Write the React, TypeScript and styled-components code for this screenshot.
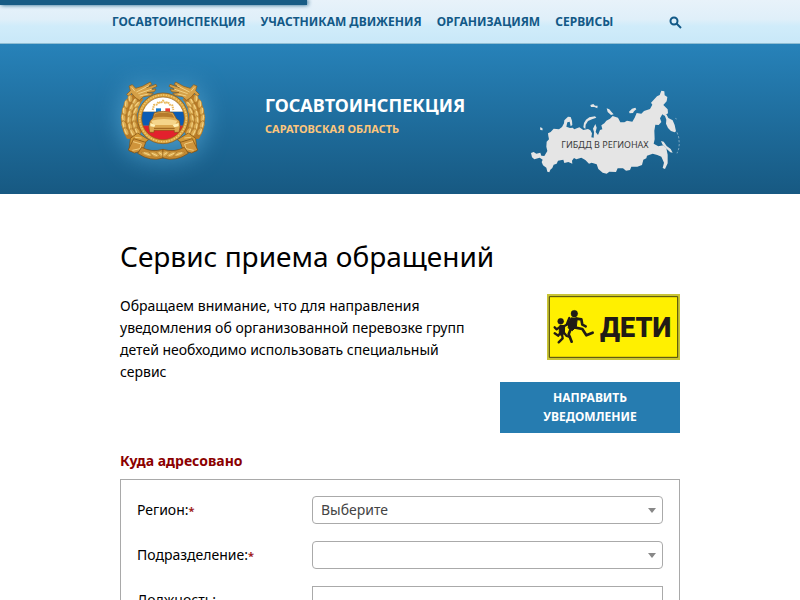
import React from "react";
import styled, { createGlobalStyle } from "styled-components";

const GlobalStyle = createGlobalStyle`
  *, *::before, *::after { box-sizing: border-box; }
  body {
    margin: 0;
    background: #fff;
    color: #000;
    font: 14px/22px "Noto Sans", "Open Sans", sans-serif;
  }
  h1, h2, p { margin: 0; }
  a { color: inherit; text-decoration: none; }
`;

const Container = styled.div`
  width: 100%;
  max-width: 576px;
  margin: 0 auto;
  padding: 0 8px;
`;

const TopBar = styled.header`
  border-bottom: 1px solid #8fbdd3;
  background: linear-gradient(#e8f2fa, #dfeff9 45%, #d0ecfa 60%, #c9e8f8);
`;

const Progress = styled.div`
  width: 307px;
  height: 5px;
  background: #175b85;
  box-shadow: 1px 0 4px #175b85;
`;

const NavRow = styled(Container)`
  display: flex;
  align-items: center;
  justify-content: space-between;
  height: 38px;
  padding: 0 6px 4px 0;
`;

const Nav = styled.nav`
  display: flex;
  gap: 15px;
  color: #125987;
  font-size: 12px;
  font-weight: 700;
  white-space: nowrap;
`;

const SearchButton = styled.button`
  display: flex;
  padding: 0;
  border: 0;
  background: none;
  color: #125987;
`;

const Banner = styled.section`
  background: linear-gradient(#2782b9, #175982);
`;

const BannerRow = styled(Container)`
  display: flex;
  align-items: center;
  height: 150px;
`;

const Emblem = styled.svg`
  width: 86px;
  height: 80px;
  flex: none;
  margin-top: 4px;
  filter: drop-shadow(0 0 12px #4b9bc8);
`;

const Titles = styled.div`
  display: grid;
  gap: 4px;
  margin: 0 auto 4px 59px;
`;

const SiteName = styled.a`
  color: #fff;
  font-size: 18px;
  font-weight: 700;
  line-height: 20px;
`;

const RegionName = styled.p`
  color: #fdc67c;
  font-size: 11px;
  font-weight: 700;
  line-height: 20px;
`;

const MapLink = styled.a`
  display: grid;
  place-items: center;
  margin-top: 26px;
  color: #3c3c3c;
  font-size: 9px;
  & > * { grid-area: 1 / 1; }
`;

const MapLabel = styled.span`
  padding-top: 26px;
`;

const Main = styled.main`
  padding: 42px 0 40px;
`;

const PageTitle = styled.h1`
  font-size: 28px;
  font-weight: 400;
  line-height: 40px;
`;

const Notice = styled.section`
  display: flex;
  justify-content: space-between;
  gap: 16px;
  margin-top: 18px;
`;

const NoticeText = styled.p`
  max-width: 360px;
  padding-top: 1px;
`;

const NoticeAside = styled.div`
  display: flex;
  flex-direction: column;
  align-items: flex-end;
  gap: 22px;
  width: 180px;
  flex: none;
`;

const NotifyLink = styled.a`
  width: 100%;
  padding: 6px 30px 7px;
  background: #267cb0;
  color: #fff;
  font-size: 12px;
  font-weight: 700;
  line-height: 19px;
  text-align: center;
`;

const SectionTitle = styled.h2`
  margin: 17px 0 7px;
  color: #8b0000;
  font-size: 14px;
  font-weight: 700;
  line-height: 22px;
`;

const Form = styled.form`
  display: grid;
  gap: 17px;
  padding: 16px;
  border: 1px solid #a9a9a9;
`;

const Field = styled.div`
  display: grid;
  grid-template-columns: 175px 1fr;
  align-items: center;
`;

const Label = styled.label`
  color: #000;
`;

const Required = styled.span`
  color: #a01c1c;
  font-size: 11px;
  font-weight: 700;
  line-height: 11px;
`;

const SelectBox = styled.div`
  display: grid;
  align-items: center;
  justify-items: end;
  & > * { grid-area: 1 / 1; }
`;

const Select = styled.select`
  appearance: none;
  width: 100%;
  height: 28px;
  padding: 0 24px 0 8px;
  border: 1px solid #aaa;
  border-radius: 4px;
  background: #fff;
  color: #444;
  font: inherit;
`;

const Arrow = styled.span`
  margin-right: 7px;
  border: 4px solid transparent;
  border-top: 5px solid #888;
  border-bottom: 0;
  pointer-events: none;
`;

const TextInput = styled.input`
  width: 100%;
  height: 28px;
  padding: 0 8px;
  border: 1px solid #aaa;
  font: inherit;
`;

const navItems = ["ГОСАВТОИНСПЕКЦИЯ", "УЧАСТНИКАМ ДВИЖЕНИЯ", "ОРГАНИЗАЦИЯМ", "СЕРВИСЫ"];

const leaves = [
  [75, 84, -4], [64, 101, 4], [58, 122, -2], [55, 143, -8], [57, 164, -14], [63, 184, -22],
  [89, 95, 24], [80, 112, 20], [74, 131, 12], [72, 150, 2], [75, 169, -12], [82, 187, -26],
  [97, 104, 40], [92, 122, 26], [87, 144, 10], [89, 165, -10], [96, 183, -28],
];

function HalfWreath() {
  return (
    <g>
      <path d="M82 72C44 96 38 166 66 206L92 208L112 184C90 158 90 114 116 88Z" fill="#b87a26" />
      {leaves.map(([x, y, a]) => (
        <g key={`${x}-${y}`} transform={`translate(${x} ${y}) rotate(${a})`}>
          <path d="M0-14Q11-3 5 11Q0 15-5 11Q-11-3 0-14Z" fill="#dcab50" stroke="#99651f" strokeWidth="1" />
          <path d="M-2-8V8" stroke="#f4d488" strokeWidth="3" />
        </g>
      ))}
      <path d="M72 48L82 44L92 55L112 49L136 36L140 43L124 53L153 43L156 49L134 59L153 57L148 65L126 68L145 70L137 77L116 80L103 91L90 82L80 70L70 78L65 73L76 62Z" fill="#d5a047" stroke="#8b5712" strokeWidth="2" />
      <path d="M94 66L132 47M100 71L141 57M104 78L130 72M80 52L90 64" fill="none" stroke="#f2d184" strokeWidth="3" />
      <path d="M76 205L98 189L131 209L119 218L104 212L84 246L72 242Z" fill="#d49b38" stroke="#7b4b0d" strokeWidth="2" />
      <path d="M86 206L122 217L113 242L88 249L70 240Z" fill="#cf943b" stroke="#7b4b0d" strokeWidth="2" />
      <path d="M84 215L109 222L105 236L82 241M90 202L110 204" fill="none" stroke="#f2cd7d" strokeWidth="3" />
      <path d="M110 232Q139 248 174 238V264Q136 276 98 250Z" fill="#c48931" stroke="#7b4b0d" strokeWidth="2" />
      <path d="M108 248Q128 238 142 256Q132 266 108 248ZM132 248Q150 240 164 258Q150 268 132 248ZM155 246Q168 240 174 246V262Q162 260 155 246Z" fill="#dcab50" stroke="#99651f" />
      <path d="M117 248L134 255M141 250L156 257M162 248L172 254" stroke="#f4d488" strokeWidth="3" />
    </g>
  );
}

function TrafficEmblem() {
  return (
    <Emblem viewBox="45 33 258 240" preserveAspectRatio="none" role="img" aria-label="Госавтоинспекция">
      <HalfWreath />
      <g transform="translate(348 0) scale(-1 1)"><HalfWreath /></g>
      <circle cx="174" cy="145" r="76" fill="#dba33b" stroke="#835012" strokeWidth="2" />
      <circle cx="174" cy="145" r="70" fill="none" stroke="#f0cc7c" strokeWidth="4" strokeDasharray="4 4" />
      <clipPath id="disc"><circle cx="174" cy="145" r="64" /></clipPath>
      <g clipPath="url(#disc)">
        <path d="M108 80H240V125H108Z" fill="#fff" />
        <path d="M108 125H240V167H108Z" fill="#0a5cb4" />
        <path d="M108 167H240V210H108Z" fill="#e3202d" />
      </g>
      <circle cx="174" cy="145" r="64" fill="none" stroke="#8d5812" strokeWidth="2" />
      <path d="M143 120L147 105L155 104L160 96L168 99L174 92L181 99L189 96L194 104L202 106L205 120" fill="none" stroke="#e9b85a" strokeWidth="6" strokeDasharray="5 2" />
      <path d="M153 115H168V127H153Z" fill="#1679c8" />
      <path d="M168 115H181V127H168Z" fill="#fff" />
      <path d="M181 115H195V127H181Z" fill="#ef3c36" />
      <path d="M148 128Q174 120 204 128L215 147L223 152Q228 169 222 187H208V181H147V187H134Q128 168 136 152L143 145Z" fill="#dba850" stroke="#875314" strokeWidth="2" />
      <path d="M151 131Q174 125 201 131L208 143Q174 137 144 143Z" fill="#b67a2b" />
      <path d="M139 152Q176 142 217 152L210 165H145Z" fill="#f5d58a" />
      <path d="M136 159L151 165L148 171L136 169ZM221 159L203 165L208 172L221 169Z" fill="#fff1b6" />
      <path d="M147 175H209" stroke="#9a6019" strokeWidth="3" />
    </Emblem>
  );
}

function RussiaMap() {
  return (
    <svg width="150" height="87" viewBox="30 30 450 261" fill="#e5e5e5" aria-hidden="true">
      <path d="M33 222L41 219L49 224L61 221L64 230L73 231L82 216L79 203L80 188L87 181L85 171L84 163L92 159L101 149L117 151L126 144L132 133L133 124L144 113L152 114L156 125L157 138L152 142L149 128L142 130L139 143L150 147L158 146L163 151L178 145L190 153L204 150L211 154L216 163L214 175L221 176L222 159L219 149L226 135L230 146L227 159L234 168L240 153L247 151L244 139L253 133L259 125L270 119L278 111L294 116L301 130L313 130L321 125L337 128L344 116L350 102L364 104L372 96L390 90L397 77L393 71L411 52L419 48L424 35L433 37L434 49L442 54L440 67L430 78L443 91L444 103L433 110L427 106L420 118L424 129L416 138L406 137L403 155L404 181L401 194L415 202L430 199L439 208L443 227L443 253L435 270L428 267L432 251L424 233L412 228L398 224L381 230L379 238L370 242L366 258L352 263L334 263L330 273L318 275L309 268L293 268L288 279L268 278L260 284L248 281L235 270L230 256L215 251L207 254L196 243L184 236L169 241L162 237L156 245L157 254L145 249L133 252L130 242L114 245L110 254L101 257L97 267L91 272L88 280L82 278L79 266L69 259L65 249L68 242L59 236L43 241L36 235Z" />
      <path d="M190 145L192 132L198 122L208 115L225 112L229 116L216 121L204 126L197 137L196 150Z" />
      <path d="M211 78L220 75L225 80L233 80L232 88L223 84L213 84ZM260 88L268 91L274 98L281 106L273 108L263 99ZM327 98L336 89L346 86L349 91L342 97L339 102L329 103ZM60 145L67 147L68 154L61 153Z" />
      <path d="M433 106L440 107L445 117L458 124L464 138L468 157L464 160L453 156L444 147L438 134L439 122ZM423 186L431 188L440 201L452 210L458 221L451 220L438 208L427 196Z" />
      <path d="M466 118L470 120M471 160L476 174L478 194L476 210L471 223" fill="none" stroke="#a7c4d6" strokeWidth="2" strokeDasharray="7 5" />
    </svg>
  );
}

const SignText = styled.text`
  font: 900 27px Roboto, sans-serif;
`;

function ChildrenSign() {
  return (
    <svg width="133" height="66" viewBox="6 6 399 198" role="img" aria-label="Дети">
      <path d="M6 6H405V204H6Z" fill="#c9c434" />
      <path d="M13 14H398V196H13Z" fill="#fff000" stroke="#49450d" strokeWidth="3" />
      <g fill="#211b16" stroke="#211b16" strokeLinecap="round" strokeLinejoin="round">
        <circle cx="88" cy="65" r="10" />
        <path d="M80 78L97 78L94 104L82 116L70 108Z" strokeWidth="3" />
        <path d="M94 80L109 82L112 98L122 103M80 81L70 97L76 107L90 103M88 106L112 111L124 130L143 122M78 109L71 127L80 149" fill="none" strokeWidth="8" />
        <circle cx="47" cy="88" r="9" />
        <path d="M46 100L59 101L58 125L47 130L43 121Z" strokeWidth="3" />
        <path d="M54 104L65 98L73 78M47 103L35 112L29 106M47 121L40 131L29 124M55 120L65 132L75 135M51 127L53 139L41 151" fill="none" strokeWidth="7" />
      </g>
      <g transform="translate(6 6) scale(3)">
        <SignText x="53" y="43" fill="#211b16">ДЕТИ</SignText>
      </g>
    </svg>
  );
}

function SelectField({ id, label, option }: { id: string; label: string; option: string }) {
  return (
    <Field>
      <Label htmlFor={id}>{label}<Required>*</Required></Label>
      <SelectBox>
        <Select id={id}><option>{option}</option></Select>
        <Arrow />
      </SelectBox>
    </Field>
  );
}

export default function App() {
  return (
    <>
      <GlobalStyle />
      <TopBar>
        <Progress />
        <NavRow>
          <Nav>{navItems.map((item) => <a href="#" key={item}>{item}</a>)}</Nav>
          <SearchButton type="button" aria-label="Поиск">
            <svg width="13" height="13" viewBox="0 0 13 13" fill="none" stroke="currentColor" strokeWidth="2">
              <circle cx="5" cy="5" r="3.500" />
              <path d="M7.500 7.500L12 12" />
            </svg>
          </SearchButton>
        </NavRow>
      </TopBar>
      <Banner>
        <BannerRow>
          <TrafficEmblem />
          <Titles>
            <SiteName href="#">ГОСАВТОИНСПЕКЦИЯ</SiteName>
            <RegionName>САРАТОВСКАЯ ОБЛАСТЬ</RegionName>
          </Titles>
          <MapLink href="#">
            <RussiaMap />
            <MapLabel>ГИБДД В РЕГИОНАХ</MapLabel>
          </MapLink>
        </BannerRow>
      </Banner>
      <Main>
        <Container>
          <PageTitle>Сервис приема обращений</PageTitle>
          <Notice>
            <NoticeText>
              Обращаем внимание, что для направления уведомления об организованной перевозке групп детей необходимо использовать специальный сервис
            </NoticeText>
            <NoticeAside>
              <ChildrenSign />
              <NotifyLink href="#">НАПРАВИТЬ УВЕДОМЛЕНИЕ</NotifyLink>
            </NoticeAside>
          </Notice>
          <SectionTitle>Куда адресовано</SectionTitle>
          <Form>
            <SelectField id="region" label="Регион:" option="Выберите" />
            <SelectField id="department" label="Подразделение:" option="" />
            <Field>
              <Label htmlFor="position">Должность:</Label>
              <TextInput id="position" type="text" />
            </Field>
          </Form>
        </Container>
      </Main>
    </>
  );
}
